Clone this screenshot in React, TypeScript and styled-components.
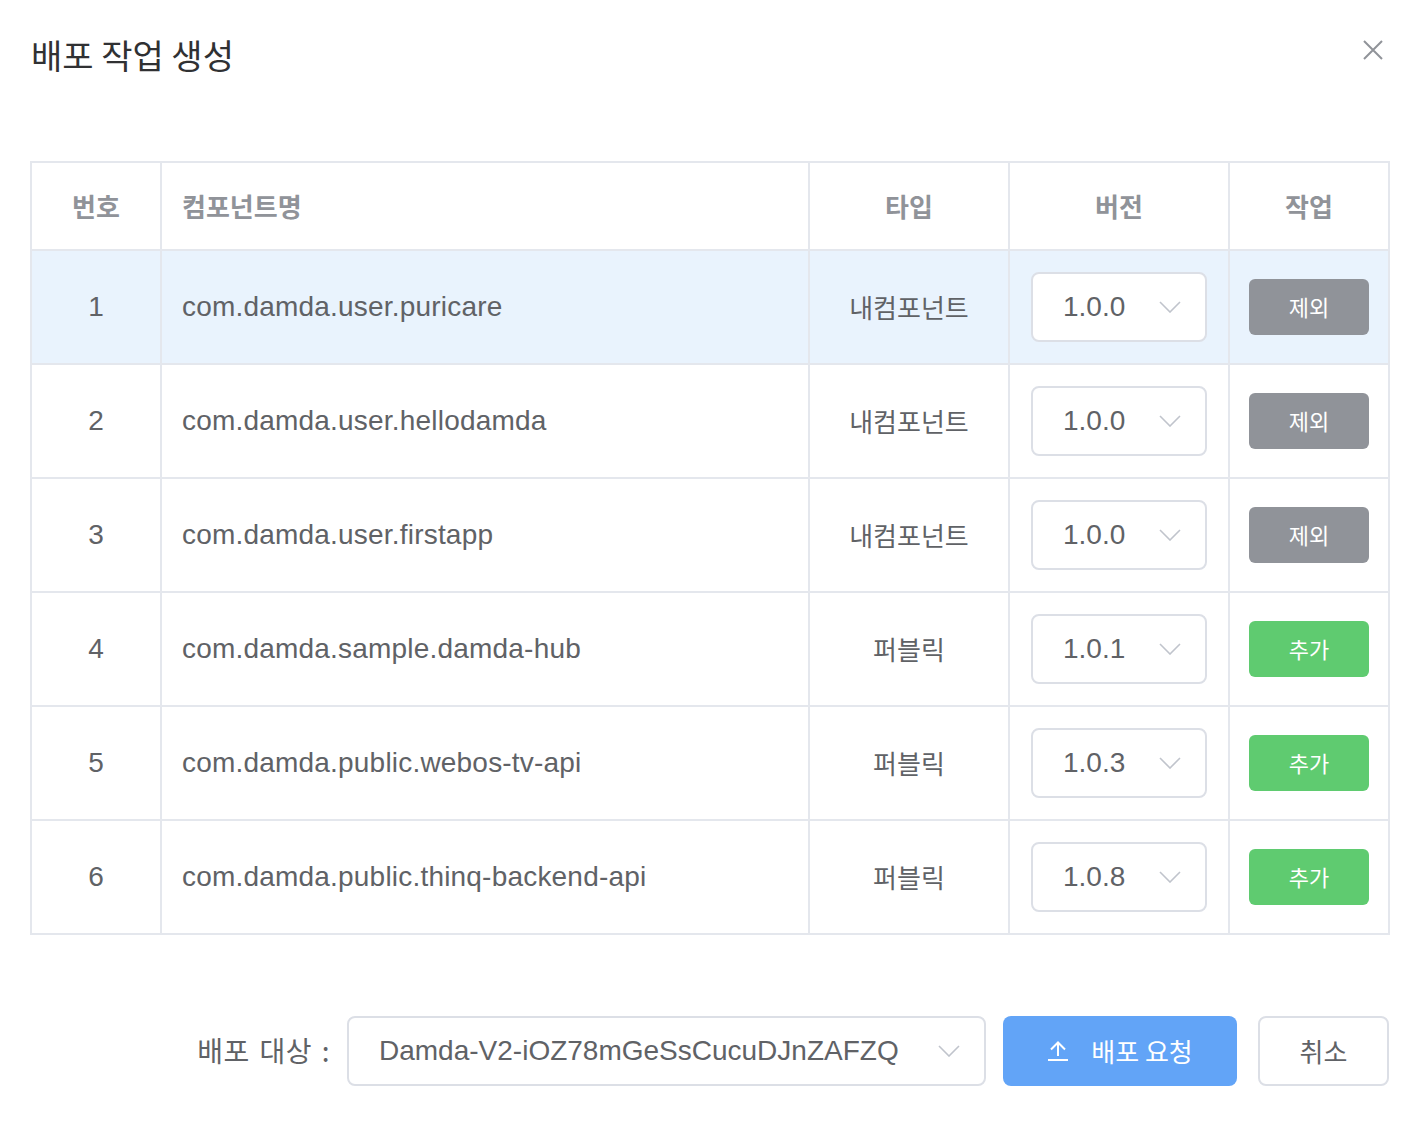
import styled, { createGlobalStyle } from "styled-components";

interface Component {
  id: number;
  name: string;
  type: string;
  version: string;
  included: boolean;
}

const components: Component[] = [
  { id: 1, name: "com.damda.user.puricare", type: "내컴포넌트", version: "1.0.0", included: true },
  { id: 2, name: "com.damda.user.hellodamda", type: "내컴포넌트", version: "1.0.0", included: true },
  { id: 3, name: "com.damda.user.firstapp", type: "내컴포넌트", version: "1.0.0", included: true },
  { id: 4, name: "com.damda.sample.damda-hub", type: "퍼블릭", version: "1.0.1", included: false },
  { id: 5, name: "com.damda.public.webos-tv-api", type: "퍼블릭", version: "1.0.3", included: false },
  { id: 6, name: "com.damda.public.thinq-backend-api", type: "퍼블릭", version: "1.0.8", included: false },
];

const GlobalStyle = createGlobalStyle`
  html, body {
    margin: 0;
    padding: 0;
    background: #fff;
  }
  body {
    font-family: "Liberation Sans", "Noto Sans CJK KR", sans-serif;
    color: #606266;
  }
`;

const Chevron = () => (
  <svg width="22" height="12" viewBox="0 0 22 12" fill="none">
    <path d="M1 1l10 10L21 1" stroke="#c0c4cc" strokeWidth="1.6" />
  </svg>
);

export default function App() {
  return (
    <>
      <GlobalStyle />
      <Dialog>
        <Header>
          <Title>배포 작업 생성</Title>
          <CloseButton aria-label="close">
            <svg width="20" height="20" viewBox="0 0 20 20" fill="none">
              <path d="M1 1l18 18M19 1L1 19" stroke="#909399" strokeWidth="2" />
            </svg>
          </CloseButton>
        </Header>

        <Table>
          <colgroup>
            <col style={{ width: 130 }} />
            <col style={{ width: 648 }} />
            <col style={{ width: 200 }} />
            <col style={{ width: 220 }} />
            <col style={{ width: 160 }} />
          </colgroup>
          <thead>
            <tr>
              <Th $align="center">번호</Th>
              <Th $align="left">컴포넌트명</Th>
              <Th $align="center">타입</Th>
              <Th $align="center">버전</Th>
              <Th $align="center">작업</Th>
            </tr>
          </thead>
          <tbody>
            {components.map((c) => (
              <Row key={c.id} $active={c.id === 1}>
                <NumCell>{c.id}</NumCell>
                <NameCell>{c.name}</NameCell>
                <TypeCell>{c.type}</TypeCell>
                <Td>
                  <VersionSelect>
                    <span>{c.version}</span>
                    <Chevron />
                  </VersionSelect>
                </Td>
                <Td>
                  <ActionButton $kind={c.included ? "remove" : "add"}>
                    {c.included ? "제외" : "추가"}
                  </ActionButton>
                </Td>
              </Row>
            ))}
          </tbody>
        </Table>

        <Footer>
          <Label>배포 대상 :</Label>
          <TargetSelect>
            <span>Damda-V2-iOZ78mGeSsCucuDJnZAFZQ</span>
            <Chevron />
          </TargetSelect>
          <PrimaryButton>
            <svg width="22" height="22" viewBox="0 0 22 22" fill="none">
              <path d="M11 17V4M4 10.5L11 3.5l7 7M1 21h20" stroke="#fff" strokeWidth="2" />
            </svg>
            <span>배포 요청</span>
          </PrimaryButton>
          <CancelButton>취소</CancelButton>
        </Footer>
      </Dialog>
    </>
  );
}

const Dialog = styled.div`
  width: 1426px;
  height: 1126px;
  box-sizing: border-box;
  padding: 0 37px 0 30px;
  background: #fff;
`;

const Header = styled.div`
  display: flex;
  justify-content: space-between;
  align-items: flex-start;
  padding-top: 29px;
`;

const Title = styled.h2`
  margin: 0 0 0 1px;
  font-family: "Noto Sans CJK KR", sans-serif;
  font-size: 34px;
  line-height: 52px;
  font-weight: 400;
  color: #303133;
`;

const CloseButton = styled.button`
  display: flex;
  margin: 11px 6px 0 0;
  padding: 0;
  border: none;
  background: none;
  cursor: pointer;
`;

const Table = styled.table`
  margin-top: 80px;
  width: 1360px;
  table-layout: fixed;
  border-collapse: collapse;
  border: 2px solid #e4e7ed;
`;

const Th = styled.th<{ $align: "left" | "center" }>`
  height: 84px;
  padding: 0 0 2px ${(p) => (p.$align === "left" ? "20px" : "0")};
  border: 2px solid #e4e7ed;
  text-align: ${(p) => p.$align};
  font-family: "Noto Sans CJK KR", sans-serif;
  font-size: 26px;
  font-weight: 700;
  color: #909399;
`;

const Row = styled.tr<{ $active: boolean }>`
  height: 114px;
  background: ${(p) => (p.$active ? "#e9f3fd" : "#fff")};
`;

const Td = styled.td`
  padding: 0;
  border: 2px solid #e4e7ed;
  text-align: center;
  vertical-align: middle;
`;

const NumCell = styled(Td)`
  font-size: 28px;
`;

const NameCell = styled(Td)`
  padding-left: 20px;
  text-align: left;
  font-size: 28px;
  letter-spacing: 0.2px;
`;

const TypeCell = styled(Td)`
  padding-bottom: 2px;
  font-family: "Noto Sans CJK KR", sans-serif;
  font-size: 26px;
`;

const SelectBox = styled.div`
  display: flex;
  align-items: center;
  justify-content: space-between;
  box-sizing: border-box;
  height: 70px;
  padding: 0 24px 0 30px;
  border: 2px solid #dcdfe6;
  border-radius: 8px;
  background: #fff;
  font-size: 28px;
  color: #606266;
`;

const VersionSelect = styled(SelectBox)`
  width: 176px;
  margin: 0 auto;
`;

const ActionButton = styled.button<{ $kind: "add" | "remove" }>`
  width: 120px;
  height: 56px;
  padding: 0 0 2px;
  border: none;
  border-radius: 6px;
  background: ${(p) => (p.$kind === "add" ? "#5fcb70" : "#909399")};
  color: #fff;
  font-family: "Noto Sans CJK KR", sans-serif;
  font-size: 22px;
  cursor: pointer;
`;

const Footer = styled.div`
  display: flex;
  justify-content: flex-end;
  align-items: center;
  margin-top: 81px;
`;

const Label = styled.span`
  margin-right: 17px;
  padding-bottom: 2px;
  font-family: "Noto Sans CJK KR", sans-serif;
  font-size: 28px;
  letter-spacing: 0.5px;
  word-spacing: 3px;
  color: #606266;
`;

const TargetSelect = styled(SelectBox)`
  width: 639px;
`;

const PrimaryButton = styled.button`
  display: flex;
  align-items: center;
  justify-content: center;
  gap: 22px;
  width: 234px;
  height: 70px;
  margin-left: 17px;
  padding: 0 0 2px;
  border: none;
  border-radius: 8px;
  background: #62a4f7;
  color: #fff;
  font-family: "Noto Sans CJK KR", sans-serif;
  font-size: 26px;
  cursor: pointer;
`;

const CancelButton = styled.button`
  width: 131px;
  height: 70px;
  margin-left: 21px;
  padding: 0 0 2px;
  border: 2px solid #dcdfe6;
  border-radius: 8px;
  background: #fff;
  color: #606266;
  font-family: "Noto Sans CJK KR", sans-serif;
  font-size: 26px;
  cursor: pointer;
`;
